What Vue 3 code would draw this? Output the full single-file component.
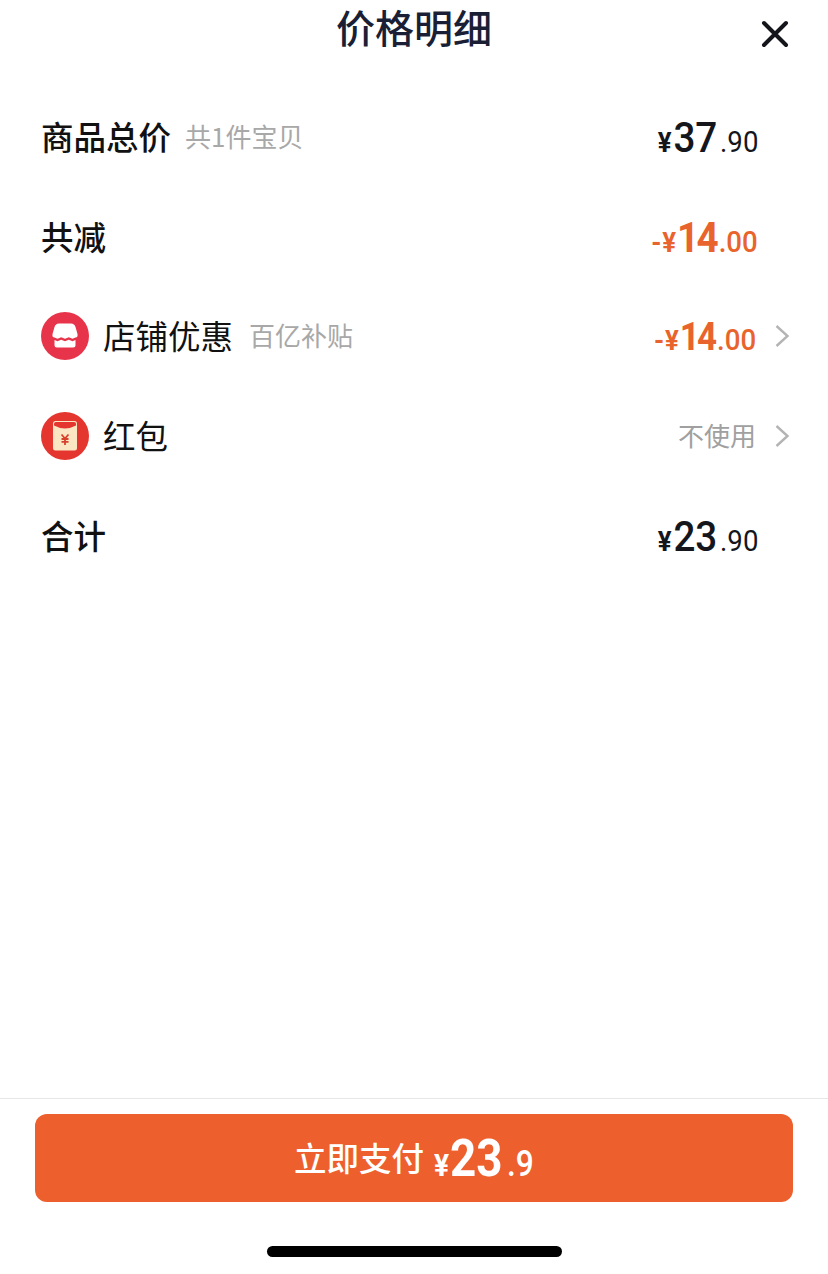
<template>
  <div class="page">
    <header class="head">
      <h1>价格明细</h1>
      <button class="close" aria-label="关闭">
        <svg width="30" height="30" viewBox="0 0 30 30">
          <path d="M4 4 L26 26 M26 4 L4 26" stroke="#14161c" stroke-width="4" stroke-linecap="round" fill="none" />
        </svg>
      </button>
    </header>

    <section class="rows">
      <div class="row">
        <div class="left">
          <span class="label bold">商品总价</span>
          <span class="note small">共1件宝贝</span>
        </div>
        <div class="price"><i>¥</i><b>37</b><em>.90</em></div>
      </div>

      <div class="row">
        <div class="left">
          <span class="label bold">共减</span>
        </div>
        <div class="price red"><i class="minus">-¥</i><b>14</b><em>.00</em></div>
      </div>

      <div class="row">
        <div class="left">
          <svg class="badge" width="48" height="48" viewBox="0 0 48 48">
            <circle cx="24" cy="24" r="24" fill="#e8344a" />
            <path d="M18 11.500 H30 Q33.500 11.500 34.500 15 L36.500 22 Q37 25.500 34.500 25.500 L31.500 26.800 L27.800 25.300 L24 26.800 L20.200 25.300 L16.500 26.800 L13.500 25.500 Q11 25.500 11.500 22 L13.500 15 Q14.500 11.500 18 11.500 Z" fill="#fff" />
            <path d="M13.500 28 L16.500 29.300 L20.200 27.800 L24 29.300 L27.800 27.800 L31.500 29.300 L34.500 28 V33 Q34.500 35.500 32 35.500 H16 Q13.500 35.500 13.500 33 Z" fill="#fff" />
          </svg>
          <span class="label">店铺优惠</span>
          <span class="note">百亿补贴</span>
        </div>
        <div class="right">
          <div class="price red mid"><i class="minus">-¥</i><b>14</b><em>.00</em></div>
          <svg class="chev" width="16" height="26" viewBox="0 0 16 26">
            <path d="M2.500 3 L13.500 13 L2.500 23" stroke="#b4b4b4" stroke-width="2.4" fill="none" />
          </svg>
        </div>
      </div>

      <div class="row">
        <div class="left">
          <svg class="badge" width="48" height="48" viewBox="0 0 48 48">
            <circle cx="24" cy="24" r="24" fill="#e4352f" />
            <rect x="12" y="9" width="24" height="29.500" rx="2.500" fill="#fbe6c4" />
            <path d="M13 12 Q13 10 15 10 H33 Q35 10 35 12 V13.500 Q24 19.500 13 13.500 Z" fill="#e4352f" />
            <path d="M20.500 22.500 L24 26.500 L27.500 22.500 M20.500 27 H27.500 M20.500 29.800 H27.500 M24 26.500 V33" stroke="#d8402c" stroke-width="1.800" fill="none" />
          </svg>
          <span class="label">红包</span>
        </div>
        <div class="right">
          <span class="unused">不使用</span>
          <svg class="chev" width="16" height="26" viewBox="0 0 16 26">
            <path d="M2.500 3 L13.500 13 L2.500 23" stroke="#b4b4b4" stroke-width="2.4" fill="none" />
          </svg>
        </div>
      </div>

      <div class="row">
        <div class="left">
          <span class="label bold">合计</span>
        </div>
        <div class="price"><i>¥</i><b>23</b><em>.90</em></div>
      </div>
    </section>

    <footer class="foot">
      <button class="pay">
        <span class="pay-text">立即支付</span>
        <span class="pay-price"><i>¥</i><b>23</b><em>.9</em></span>
      </button>
      <div class="home-bar"></div>
    </footer>
  </div>
</template>

<script setup>
</script>

<style scoped>
.page {
  width: 828px;
  height: 1274px;
  display: flex;
  flex-direction: column;
  background: #fff;
  font-family: "Noto Sans CJK SC", "Liberation Sans", sans-serif;
  color: #14161c;
}

.head {
  height: 56px;
  position: relative;
  display: flex;
  justify-content: center;
}

.head h1 {
  margin: 0;
  font-size: 39px;
  line-height: 52px;
  font-weight: 500;
  color: #1a1f36;
}

.close {
  position: absolute;
  right: 38px;
  top: 19px;
  padding: 0;
  border: 0;
  background: none;
  display: flex;
}

.rows {
  flex: 1;
  padding: 31px 38px 0 41px;
  display: flex;
  flex-direction: column;
}

.row {
  height: 99.750px;
  display: flex;
  justify-content: space-between;
  align-items: center;
}

.left,
.right {
  display: flex;
  align-items: center;
}

.label {
  padding-bottom: 3px;
  font-size: 32.500px;
  color: #111;
}

.label.bold {
  font-weight: 500;
}

.badge {
  margin-right: 14px;
}

.note {
  padding-bottom: 3px;
  margin-left: 16px;
  font-size: 26px;
  color: #a8a8a8;
}

.note.small {
  margin-left: 14px;
}

.price {
  margin-right: 32px;
  padding-top: 1px;
  display: flex;
  align-items: baseline;
  font-family: Roboto, sans-serif;
  font-size: 30px;
  font-weight: 400;
  color: #14161c;
  transform: scaleX(0.92);
  transform-origin: right center;
}

.price i {
  margin-right: 2px;
  font-style: normal;
  font-size: 28px;
  font-weight: 700;
}

.price b {
  font-size: 42px;
  font-weight: 500;
}

.price em {
  margin-left: 3px;
  font-style: normal;
}

.price.red {
  color: #e8642c;
  font-weight: 500;
}

.price.red i {
  margin-right: 0;
}

.price.red b {
  font-weight: 700;
  letter-spacing: -3px;
}

.price.mid {
  margin-right: 18px;
}

.price.mid b {
  font-size: 38px;
}

.minus {
  letter-spacing: 1px;
}

.unused {
  padding-bottom: 3px;
  margin-right: 18px;
  font-size: 26px;
  color: #a0a0a0;
}

.chev {
  display: block;
}

.foot {
  height: 175px;
  border-top: 1px solid #e6e6e6;
  display: flex;
  flex-direction: column;
  align-items: center;
}

.pay {
  margin-top: 15px;
  width: 758px;
  height: 88px;
  padding: 0 0 0 259px;
  border: 0;
  border-radius: 12px;
  background: #ee5f2e;
  color: #fff;
  font-family: inherit;
  font-size: 32.500px;
  font-weight: 500;
  display: flex;
  align-items: center;
  gap: 10px;
}

.pay-text {
  padding-bottom: 4px;
}

.pay-price {
  display: flex;
  align-items: baseline;
  font-family: Roboto, sans-serif;
  transform: scaleX(0.88);
  transform-origin: left center;
}

.pay-price i {
  margin-right: 1px;
  font-style: normal;
  font-size: 32px;
  font-weight: 700;
}

.pay-price b {
  font-size: 52px;
  font-weight: 700;
}

.pay-price em {
  margin-left: 5px;
  font-style: normal;
  font-size: 36px;
  font-weight: 500;
}

.home-bar {
  margin-top: 44px;
  width: 295px;
  height: 11px;
  border-radius: 5.500px;
  background: #000;
}
</style>
